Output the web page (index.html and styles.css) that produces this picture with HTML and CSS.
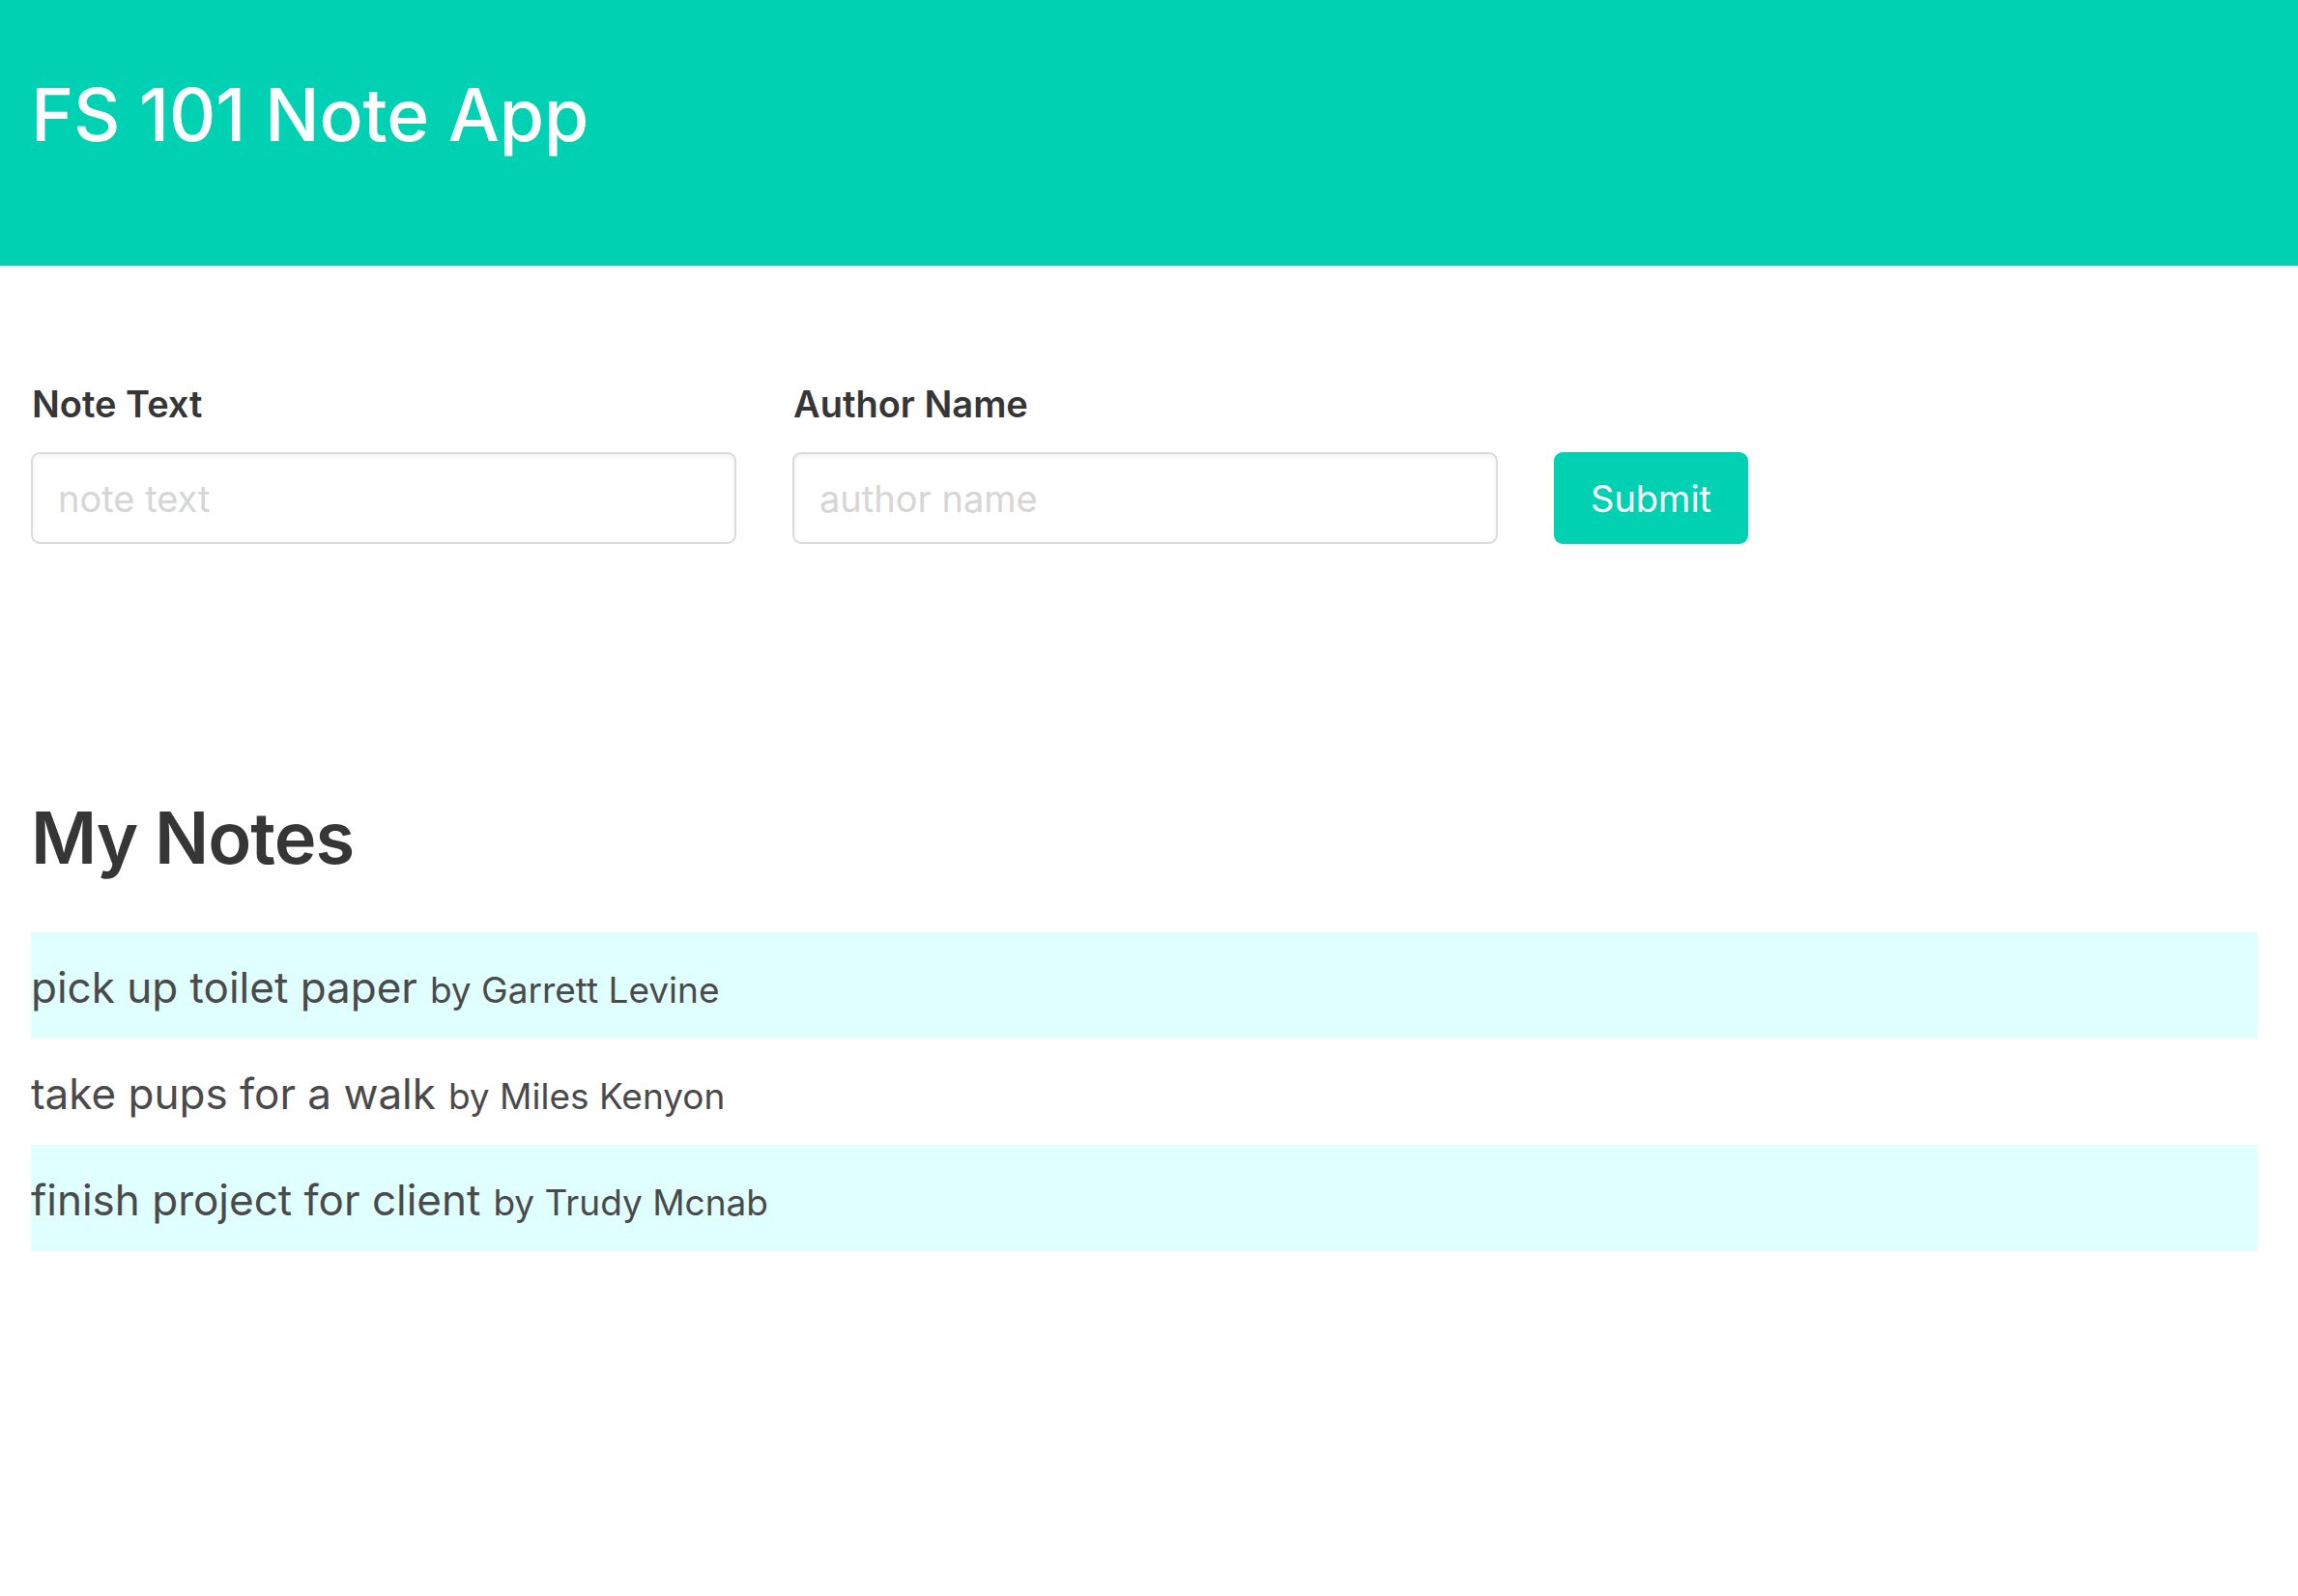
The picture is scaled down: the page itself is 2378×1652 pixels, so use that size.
FILE: index.html
```html
<!DOCTYPE html>
<html lang="en">
<head>
<meta charset="utf-8">
<title>FS 101 Note App</title>
<link rel="stylesheet" href="styles.css">
</head>
<body>
<header class="hero">
  <h1 class="hero-title">FS 101 Note App</h1>
</header>
<main class="content">
  <form class="note-form">
    <div class="field">
      <label class="label" for="note">Note Text</label>
      <input class="input" id="note" type="text" placeholder="note text">
    </div>
    <div class="field">
      <label class="label" for="author">Author Name</label>
      <input class="input" id="author" type="text" placeholder="author name">
    </div>
    <div class="field field-button">
      <button class="button" type="button">Submit</button>
    </div>
  </form>
  <section class="notes">
    <h2 class="notes-title">My Notes</h2>
    <ul class="note-list">
      <li class="note note-odd"><span class="note-text">pick up toilet paper</span> <span class="note-author">by Garrett Levine</span></li>
      <li class="note"><span class="note-text">take pups for a walk</span> <span class="note-author">by Miles Kenyon</span></li>
      <li class="note note-odd"><span class="note-text">finish project for client</span> <span class="note-author">by Trudy Mcnab</span></li>
    </ul>
  </section>
</main>
</body>
</html>
```
FILE: styles.css
```css
* { box-sizing: border-box; }
html, body { margin: 0; padding: 0; background: #fff; }
body {
  font-family: Inter, "Noto Sans", "Liberation Sans", sans-serif;
  color: #4a4a4a;
}
.hero {
  background: #00d1b2;
  height: 275px;
  padding: 81px 32px 0;
}
.hero-title {
  margin: 0;
  color: #fff;
  font-size: 75px;
  font-weight: 500;
  line-height: 1;
  letter-spacing: -0.2px;
}
.content {
  padding: 0 42px 0 32px;
}
.note-form {
  display: flex;
  align-items: flex-end;
  gap: 58px;
  padding-top: 124px;
}
.field {
  display: flex;
  flex-direction: column;
  width: 730px;
}
.field-button { width: auto; }
.label {
  color: #363636;
  font-size: 38px;
  font-weight: 600;
  line-height: 1;
  margin-bottom: 31px;
  padding-left: 1px;
}
.input {
  height: 95px;
  width: 100%;
  border: 2px solid #dbdbdb;
  border-radius: 9px;
  box-shadow: inset 0 2px 5px rgba(10,10,10,0.06);
  padding: 0 26px;
  font-family: inherit;
  font-size: 38px;
  color: #363636;
  background: #fff;
  outline: none;
}
.input::placeholder { color: #d6d6d6; }
.button {
  height: 95px;
  padding: 0 38px;
  border: none;
  border-radius: 9px;
  background: #00d1b2;
  color: #fff;
  font-family: inherit;
  font-size: 38px;
  font-weight: 400;
  cursor: pointer;
}
.notes { margin-top: 267px; }
.notes-title {
  margin: 0 0 61px;
  color: #363636;
  font-size: 74px;
  font-weight: 600;
  line-height: 1;
  letter-spacing: -1px;
}
.note-list {
  list-style: none;
  margin: 0;
  padding: 0;
}
.note {
  height: 110px;
  display: flex;
  align-items: baseline;
  gap: 13px;
  padding-top: 35px;
  white-space: nowrap;
}
.note-odd { background: #e0ffff; }
.note-text { font-size: 44px; line-height: 1; }
.note-author { font-size: 37px; line-height: 1; }
```
